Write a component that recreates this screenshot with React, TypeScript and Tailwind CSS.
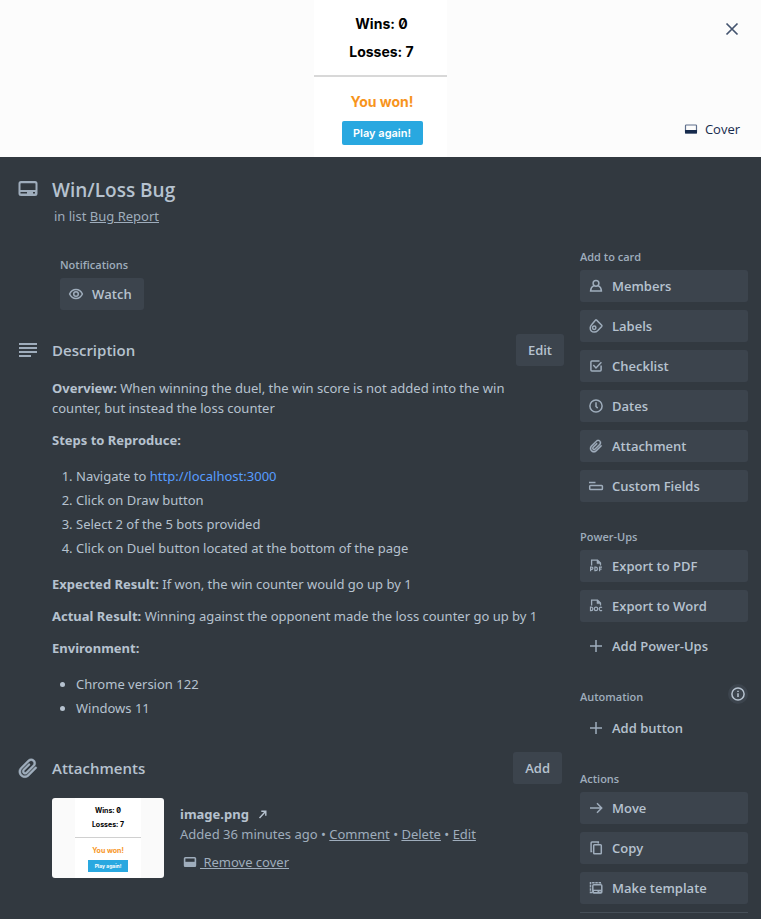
import type { ReactNode } from "react";

type IconProps = { children: ReactNode; size?: string; box?: string };

function Icon({ children, size = "size-4", box = "0 0 16 16" }: IconProps) {
  return (
    <svg
      className={`${size} shrink-0`}
      viewBox={box}
      fill="none"
      stroke="currentColor"
      strokeWidth="1.5"
      aria-hidden="true"
    >
      {children}
    </svg>
  );
}

const icons = {
  close: (
    <Icon>
      <path d="M2.500 2.500l11 11M13.500 2.500l-11 11" strokeWidth="1.700" />
    </Icon>
  ),
  cover: (
    <Icon>
      <rect x="2.500" y="4" width="11" height="8" rx="0.800" strokeWidth="1.200" stroke="#5f6f8c" />
      <path d="M2 9h12v3.500H2z" fill="currentColor" stroke="none" />
    </Icon>
  ),
  coverFill: (
    <Icon>
      <rect x="2.600" y="3.700" width="10.800" height="8.600" rx="0.800" strokeWidth="1.600" />
      <path d="M2 7.800h12v4.500H2z" fill="currentColor" stroke="none" />
    </Icon>
  ),
  card: (
    <Icon size="size-6" box="0 1 24 24">
      <path
        fill="currentColor"
        stroke="none"
        fillRule="evenodd"
        d="M5 4a2.500 2.500 0 0 0-2.500 2.500v10A2.500 2.500 0 0 0 5 19h14a2.500 2.500 0 0 0 2.500-2.500v-10A2.500 2.500 0 0 0 19 4H5zm14 2.200H5a.5.500 0 0 0-.5.500V13h15V6.700a.5.500 0 0 0-.5-.5zM4.500 15h6.500v1.500H4.500zM17 15h2v1.500h-2z"
      />
    </Icon>
  ),
  lines: (
    <Icon size="size-6" box="0 0 24 24">
      <path d="M3 6h18M3 10h18M3 14h18M3 18h12" strokeWidth="2" />
    </Icon>
  ),
  eye: (
    <Icon>
      <path d="M1.600 8C3 5 5.300 3.500 8 3.500S13 5 14.400 8C13 11 10.700 12.500 8 12.500S3 11 1.600 8z" />
      <circle cx="8" cy="8" r="2.300" />
    </Icon>
  ),
  member: (
    <Icon>
      <circle cx="8" cy="5.300" r="2.900" />
      <path d="M5.900 7.600C3.900 8.500 2.700 10.200 2.600 12.900h10.800c-.1-2.700-1.300-4.400-3.300-5.300" />
    </Icon>
  ),
  label: (
    <Icon>
      <path d="M8.600 2.100l5.100 5.100a.9.900 0 0 1 0 1.200l-4.100 4.300c-1.700 1.700-4.700 1.900-6.300.3s-1.400-4.600.3-6.300l3.800-4.500a.9.900 0 0 1 1.200-.1z" />
      <circle cx="6.200" cy="9.700" r="1.700" />
    </Icon>
  ),
  check: (
    <Icon>
      <path d="M11.500 2.900H3.900a1 1 0 0 0-1 1v8.200a1 1 0 0 0 1 1h8.200a1 1 0 0 0 1-1V7.500" />
      <path d="M5.300 7l2.700 2.900 5.400-5.600" />
    </Icon>
  ),
  clock: (
    <Icon>
      <circle cx="8" cy="8" r="6.100" />
      <path d="M8 4.300v4.200l1.700 1.600" />
    </Icon>
  ),
  custom: (
    <Icon>
      <rect x="1.700" y="7.500" width="12.700" height="4" rx="0.800" />
      <path d="M1 4.500h6.500" />
    </Icon>
  ),
  pdf: <FileIcon kind="pdf" />,
  doc: <FileIcon kind="doc" />,
  plus: (
    <Icon>
      <path d="M8 2v12M2 8h12" />
    </Icon>
  ),
  info: (
    <Icon>
      <circle cx="8" cy="8" r="6.100" />
      <path d="M8 7.200v3.800M8 4.700v1.300" />
    </Icon>
  ),
  arrow: (
    <Icon>
      <path d="M2 8h11.500M9 3.200L13.700 8 9 12.800" />
    </Icon>
  ),
  copy: (
    <Icon>
      <path d="M4.200 11.400H3.100V3a.9.900 0 0 1 .9-.9h6.300v1.300" />
      <rect x="5.700" y="4.700" width="7.600" height="9.100" rx="0.800" />
    </Icon>
  ),
  template: (
    <Icon>
      <rect x="4.800" y="4.700" width="9" height="8.300" rx="1" />
      <path d="M4.600 9.700h9.200V13H4.600z" fill="currentColor" stroke="none" />
      <path d="M4 12.500H2.500V2.800h10.500v1" strokeDasharray="2.500 0.700" />
      <path d="M6 11.500h3.500M11.500 11.500h1" stroke="#3c444d" strokeWidth="1" />
    </Icon>
  ),
  open: (
    <Icon size="size-3" box="0 0 12 12">
      <path d="M2.500 10l5.500-6M4.300 3.300h4.500V7.800" strokeWidth="1.400" />
    </Icon>
  ),
};

function Clip({ size = "size-4" }: { size?: string }) {
  return (
    <Icon size={size} box="0 0 24 24">
      <path
        fill="currentColor"
        strokeWidth="0.400"
        fillRule="evenodd"
        clipRule="evenodd"
        d="M11.643 18.485c-1.562 1.562-4.095 1.562-5.657 0-1.562-1.562-1.562-4.095 0-5.657l7.425-7.424c.977-.977 2.560-.977 3.536 0 .976.976.976 2.559 0 3.535l-7.071 7.071c-.390.391-1.024.391-1.414 0-.391-.390-.391-1.024 0-1.414l5.303-5.303c.391-.391.391-1.024 0-1.415-.390-.390-1.023-.390-1.414 0l-5.303 5.304c-1.172 1.171-1.172 3.071 0 4.242 1.171 1.172 3.071 1.172 4.242 0l7.071-7.071c1.758-1.757 1.758-4.606 0-6.364-1.757-1.757-4.606-1.757-6.364 0l-7.424 7.425c-2.344 2.343-2.344 6.142 0 8.485 2.343 2.343 6.142 2.343 8.485 0l7.425-7.425c.390-.390.390-1.023 0-1.414-.391-.390-1.024-.390-1.414 0l-7.425 7.425z"
      />
    </Icon>
  );
}

function FileIcon({ kind }: { kind: "pdf" | "doc" }) {
  return (
    <Icon>
      <path d="M3.600 7.500V2.100h5.900l3 3V7.500" strokeWidth="1.300" />
      <path d="M9 2v3.600h3.800z" fill="currentColor" strokeWidth="0.600" />
      {kind === "pdf" ? (
        <g strokeWidth="1.200">
          <path d="M2.600 13.200V9.200h1.200a1.100 1.100 0 0 1 0 2.200H2.600" />
          <path d="M6.900 9.200h.8a1.700 1.700 0 0 1 0 3.400h-.8z" />
          <path d="M11.600 13.200V9.200h2.400M11.600 11.200h2" />
        </g>
      ) : (
        <g strokeWidth="1.200">
          <path d="M2.500 9.200h.7a1.700 1.700 0 0 1 0 3.400h-.7z" />
          <circle cx="8" cy="10.900" r="1.700" />
          <path d="M14 9.600a1.700 1.700 0 1 0 0 2.600" />
        </g>
      )}
    </Icon>
  );
}

function SmallHeading({ children }: { children: ReactNode }) {
  return <h3 className="pb-[2px] text-[11px] leading-[18px] font-semibold text-[#9fadbc]">{children}</h3>;
}

function SideButton({ icon, children, plain = false }: { icon: ReactNode; children: ReactNode; plain?: boolean }) {
  return (
    <button
      type="button"
      className={`flex h-8 w-full items-center gap-2 rounded-[3px] px-2 text-left leading-5 font-semibold ${
        plain ? "" : "bg-[#3c444d]"
      }`}
    >
      <span className="text-[#9fadbc]">{icon}</span>
      {children}
    </button>
  );
}

function SideGroup({ title, action, children }: { title: string; action?: ReactNode; children: ReactNode }) {
  return (
    <section>
      <div className="mb-[2px] flex items-start justify-between">
        <SmallHeading>{title}</SmallHeading>
        {action}
      </div>
      <div className="flex flex-col gap-2">{children}</div>
    </section>
  );
}

function Cover() {
  return (
    <div className="relative flex h-[157px] justify-center bg-[#fcfcfc]">
      <div className="w-[133px] bg-white text-center font-['Inter',sans-serif] text-[14px] leading-7 font-bold text-black">
        <div className="pt-[10px] pl-[2px]">
          <p className="slashed-zero">Wins: 0</p>
          <p>Losses: 7</p>
        </div>
        <div className="mt-[9px] h-[2px] bg-[#d8d8d8]" />
        <div className="flex flex-col items-center pt-[11px] pl-[3px]">
          <p className="text-[#f7941d]">You won!</p>
          <div className="mt-[5px] h-6 w-[81px] rounded-[2px] bg-[#29a8e0] text-[11px] leading-6 font-semibold text-white">
            Play again!
          </div>
        </div>
      </div>
      <button type="button" aria-label="Close" className="absolute top-[21px] right-[21px] text-[#44546f]">
        {icons.close}
      </button>
      <button
        type="button"
        className="absolute right-[21px] bottom-[18px] flex items-center gap-[6px] leading-5 text-[#172b4d]"
      >
        {icons.cover}
        Cover
      </button>
    </div>
  );
}

function Thumbnail() {
  return (
    <a
      href="#image"
      aria-label="image.png"
      className="flex h-20 w-28 shrink-0 justify-center overflow-hidden rounded-[3px] bg-[#fafafa] font-['Inter',sans-serif]"
    >
      <span className="flex w-[66px] flex-col items-center bg-white text-[7px] leading-[14px] font-bold text-black">
        <span className="mt-[6px] slashed-zero">Wins: 0</span>
        <span>Losses: 7</span>
        <span className="mt-[5px] h-px w-full bg-[#d0d0d0]" />
        <span className="mt-[6px] text-[#f7941d]">You won!</span>
        <span className="mt-[2px] h-3 w-10 bg-[#29a8e0] text-center text-[5px] leading-3 text-white">Play again!</span>
      </span>
    </a>
  );
}

function SectionHead({ icon, title, action }: { icon: ReactNode; title: string; action: string }) {
  return (
    <div className="flex h-8 items-center">
      <span className="mr-3 -ml-9 text-[#9fadbc]">{icon}</span>
      <h2 className="flex-1 text-[15px] leading-5 font-semibold">{title}</h2>
      <button type="button" className="h-8 rounded-[3px] bg-[#3c444d] px-3 leading-5 font-semibold">
        {action}
      </button>
    </div>
  );
}

export default function App() {
  return (
    <div className="min-h-screen bg-[#323940] font-['Open_Sans','Noto_Sans',sans-serif] text-[13px] leading-5 text-[#b6c2cf]">
      <Cover />
      <header className="flex items-start gap-3 pt-[21px] pl-4">
        <span className="text-[#9fadbc]">{icons.card}</span>
        <div>
          <h1 className="text-[19px] leading-6 font-semibold">Win/Loss Bug</h1>
          <p className="pt-1 pl-[2px] font-['Noto_Sans',sans-serif] text-[#9fadbc]">
            in list{" "}
            <a href="#list" className="underline">
              Bug Report
            </a>
          </p>
        </div>
      </header>

      <div className="flex gap-4 pt-[22px] pr-[13px] pl-[52px]">
        <main className="min-w-0 flex-1 pt-2">
          <section className="pl-2">
            <SmallHeading>Notifications</SmallHeading>
            <button
              type="button"
              className="mt-[2px] flex h-8 items-center gap-2 rounded-[3px] bg-[#3c444d] px-2 pr-3 font-semibold"
            >
              <span className="text-[#9fadbc]">{icons.eye}</span>
              Watch
            </button>
          </section>

          <section className="pt-6">
            <SectionHead icon={icons.lines} title="Description" action="Edit" />
            <div className="flex flex-col gap-3 pt-3 pr-3 font-['Noto_Sans',sans-serif]">
              <p>
                <strong>Overview:</strong> When winning the duel, the win score is not added into the win counter, but
                instead the loss counter
              </p>
              <p>
                <strong>Steps to Reproduce:</strong>
              </p>
              <ol className="my-1 flex list-decimal flex-col gap-1 pl-6">
                <li>
                  Navigate to{" "}
                  <a href="http://localhost:3000" className="text-[#579dff]">
                    http://localhost:3000
                  </a>
                </li>
                <li>Click on Draw button</li>
                <li>Select 2 of the 5 bots provided</li>
                <li>Click on Duel button located at the bottom of the page</li>
              </ol>
              <p>
                <strong>Expected Result:</strong> If won, the win counter would go up by 1
              </p>
              <p>
                <strong>Actual Result:</strong> Winning against the opponent made the loss counter go up by 1
              </p>
              <p>
                <strong>Environment:</strong>
              </p>
              <ul className="my-1 flex list-disc flex-col gap-1 pl-6">
                <li>Chrome version 122</li>
                <li>Windows 11</li>
              </ul>
            </div>
          </section>

          <section className="pt-[30px] pr-[2px]">
            <SectionHead icon={<Clip size="size-6" />} title="Attachments" action="Add" />
            <div className="flex gap-4 pt-[14px]">
              <Thumbnail />
              <div className="pt-[6px] font-['Noto_Sans',sans-serif] text-[#9fadbc]">
                <p className="flex items-center gap-2 font-bold text-[#b6c2cf]">
                  image.png {icons.open}
                </p>
                <p>
                  Added 36 minutes ago •{" "}
                  <a href="#comment" className="underline">
                    Comment
                  </a>{" "}
                  •{" "}
                  <a href="#delete" className="underline">
                    Delete
                  </a>{" "}
                  •{" "}
                  <a href="#edit" className="underline">
                    Edit
                  </a>
                </p>
                <a href="#cover" className="flex items-center gap-[2px] pt-2 pl-[2px]">
                  {icons.coverFill}
                  <span className="whitespace-pre underline"> Remove cover</span>
                </a>
              </div>
            </div>
          </section>
        </main>

        <aside className="flex w-[168px] shrink-0 flex-col gap-[26px]">
          <SideGroup title="Add to card">
            <SideButton icon={icons.member}>Members</SideButton>
            <SideButton icon={icons.label}>Labels</SideButton>
            <SideButton icon={icons.check}>Checklist</SideButton>
            <SideButton icon={icons.clock}>Dates</SideButton>
            <SideButton icon={<Clip />}>Attachment</SideButton>
            <SideButton icon={icons.custom}>Custom Fields</SideButton>
          </SideGroup>
          <SideGroup title="Power-Ups">
            <SideButton icon={icons.pdf}>Export to PDF</SideButton>
            <SideButton icon={icons.doc}>Export to Word</SideButton>
            <SideButton icon={icons.plus} plain>
              Add Power-Ups
            </SideButton>
          </SideGroup>
          <SideGroup
            title="Automation"
            action={
              <button
                type="button"
                aria-label="About automation"
                className="-mt-1 mb-[6px] flex size-5 items-center justify-center rounded-full bg-[#3c444d]"
              >
                {icons.info}
              </button>
            }
          >
            <SideButton icon={icons.plus} plain>
              Add button
            </SideButton>
          </SideGroup>
          <SideGroup title="Actions">
            <SideButton icon={icons.arrow}>Move</SideButton>
            <SideButton icon={icons.copy}>Copy</SideButton>
            <SideButton icon={icons.template}>Make template</SideButton>
            <hr className="border-[#464f58]" />
          </SideGroup>
        </aside>
      </div>
    </div>
  );
}
